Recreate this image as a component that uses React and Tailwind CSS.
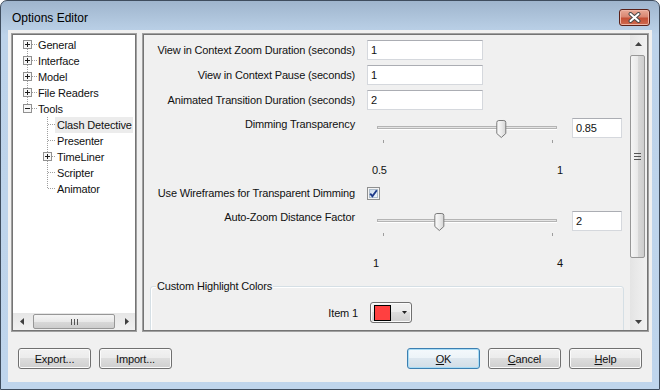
import React from "react";

const FONT = "font-['Liberation_Sans',Arial,sans-serif]";

function Box({ x, y, minus }) {
  return (
    <g>
      <rect x={x + 0.5} y={y + 0.5} width="8" height="8" fill="#f7f7f7" stroke="#919191" />
      <line x1={x + 2} x2={x + 7} y1={y + 4.5} y2={y + 4.5} stroke="#1e1e1e" />
      {!minus && <line x1={x + 4.5} x2={x + 4.5} y1={y + 2} y2={y + 7} stroke="#1e1e1e" />}
    </g>
  );
}

function Dots({ x1, y1, x2, y2 }) {
  return <line x1={x1} y1={y1} x2={x2} y2={y2} stroke="#a0a0a0" strokeDasharray="1 1" />;
}

function RootGutter({ top, bottom, minus }) {
  return (
    <svg width="25" height="16" shapeRendering="crispEdges" className="shrink-0">
      {top && <Dots x1={14.5} y1={0} x2={14.5} y2={3} />}
      {bottom && <Dots x1={14.5} y1={12} x2={14.5} y2={16} />}
      <Dots x1={19} y1={7.5} x2={25} y2={7.5} />
      <Box x={10} y={3} minus={minus} />
    </svg>
  );
}

function ChildGutter({ last, box }) {
  return (
    <svg width="42" height="16" shapeRendering="crispEdges" className="shrink-0">
      {box ? (
        <>
          <Dots x1={34.5} y1={0} x2={34.5} y2={3} />
          <Dots x1={34.5} y1={12} x2={34.5} y2={16} />
          <Dots x1={39} y1={7.5} x2={42} y2={7.5} />
          <Box x={30} y={3} />
        </>
      ) : (
        <>
          <Dots x1={34.5} y1={0} x2={34.5} y2={last ? 8 : 16} />
          <Dots x1={35} y1={7.5} x2={42} y2={7.5} />
        </>
      )}
    </svg>
  );
}

function TextBox({ value, className }) {
  return (
    <div
      className={`h-[20px] bg-white border border-[#d5d8dd] border-t-[#abadb3] pl-[3px] flex items-center leading-[14px] ${className}`}
    >
      {value}
    </div>
  );
}

function Slider({ v }) {
  const cx = 11 + v * 169;
  const left = cx - 5;
  return (
    <svg width="190" height="26" shapeRendering="crispEdges" className="shrink-0 ml-[17px]">
      <defs>
        <linearGradient id="thumbg" x1="0" x2="1" y1="0" y2="0">
          <stop offset="0" stopColor="#fbfbfb" />
          <stop offset="0.5" stopColor="#ececec" />
          <stop offset="1" stopColor="#d4d4d4" />
        </linearGradient>
      </defs>
      <rect x="5.5" y="8.5" width="179" height="2" fill="#e4e4e4" stroke="#b4b4b4" />
      <line x1="5" x2="185" y1="11.5" y2="11.5" stroke="#ffffff" />
      <line x1="11.5" x2="11.5" y1="22" y2="25" stroke="#9d9d9d" />
      <line x1="180.5" x2="180.5" y1="22" y2="25" stroke="#9d9d9d" />
      <g transform={`translate(${left},2)`} shapeRendering="geometricPrecision">
        <path
          d="M0.5,2.5 Q0.5,0.5 2.5,0.5 H7.5 Q9.5,0.5 9.5,2.5 V13.5 L5,17.5 L0.5,13.5 Z"
          fill="url(#thumbg)"
          stroke="#7a7a7a"
        />
      </g>
    </svg>
  );
}

function Btn({ children, def }) {
  return (
    <div
      className={`w-[73px] h-[21px] rounded-[3px] border flex items-center justify-center leading-[14px] ${
        def
          ? "border-[#3c7fb1] shadow-[inset_0_0_0_1px_#a8dcf5] bg-[linear-gradient(to_bottom,#f4f9fc_0%,#ecf3f8_50%,#dde7ef_50%,#d2dde6_100%)]"
          : "border-[#707070] shadow-[inset_0_0_0_1px_#fbfbfb] bg-[linear-gradient(to_bottom,#f2f2f2_0%,#ebebeb_50%,#dddddd_50%,#cfcfcf_100%)]"
      }`}
    >
      {children}
    </div>
  );
}

function Tri({ dir }) {
  const paths = {
    up: "M3.5,0 L7,4 L0,4 Z",
    down: "M0,0 L7,0 L3.5,4 Z",
    left: "M4,0 L4,7 L0,3.5 Z",
    right: "M0,0 L4,3.5 L0,7 Z",
  };
  const horiz = dir === "left" || dir === "right";
  return (
    <svg width={horiz ? 4 : 7} height={horiz ? 7 : 4}>
      <path d={paths[dir]} fill="#404040" />
    </svg>
  );
}

export default function App() {
  const roots = [
    { label: "General", top: false, bottom: true },
    { label: "Interface", top: true, bottom: true },
    { label: "Model", top: true, bottom: true },
    { label: "File Readers", top: true, bottom: true },
    { label: "Tools", top: true, bottom: false, minus: true },
  ];
  const kids = [
    { label: "Clash Detective", sel: true },
    { label: "Presenter" },
    { label: "TimeLiner", box: true },
    { label: "Scripter" },
    { label: "Animator", last: true },
  ];

  return (
    <div
      className={`${FONT} text-[11px] tracking-[-0.15px] text-[#111] w-[660px] h-[390px] flex flex-col rounded-t-[7px] border border-[#3f4d5e] bg-[linear-gradient(to_bottom,#9fb5cd_0px,#b3c9e0_22px,#bdd3ea_34px,#bfd5ec_100%)] px-[7px] overflow-hidden`}
    >
      {/* title bar */}
      <div className="h-[29px] -mx-[7px] pl-[11px] pr-[9px] flex items-start justify-between shrink-0">
        <span className="mt-[10px] text-[12px] tracking-normal leading-[15px] text-black">Options Editor</span>
        <div className="mt-[8px] w-[31px] h-[17px] rounded-[3px] border border-[#5b2118] bg-[linear-gradient(to_bottom,#e8a996_0%,#d98772_45%,#c45036_55%,#cf6a4e_100%)] shadow-[inset_0_0_0_1px_#eeb5a6] flex items-center justify-center">
          <svg width="13" height="11">
            <path d="M2.5,2 L10.5,9 M10.5,2 L2.5,9" stroke="#4a4a4a" strokeWidth="4" strokeLinecap="round" />
            <path d="M2.5,2 L10.5,9 M10.5,2 L2.5,9" stroke="#ffffff" strokeWidth="2" strokeLinecap="round" />
          </svg>
        </div>
      </div>

      {/* client */}
      <div className="h-[352px] bg-[#f0f0f0] flex flex-col pt-[3px] px-[3px] shrink-0">
        <div className="flex gap-[5px] h-[299px]">
          {/* tree */}
          <div className="w-[126px] h-full border border-[#a0a0a0]">
            <div className="w-full h-full border border-[#747474] bg-white flex flex-col">
              <div className="flex-1 pt-[2px] flex flex-col leading-[16px]">
                {roots.map((r) => (
                  <div key={r.label} className="flex h-[16px] items-center">
                    <RootGutter top={r.top} bottom={r.bottom} minus={r.minus} />
                    <span className="whitespace-nowrap">{r.label}</span>
                  </div>
                ))}
                {kids.map((k) => (
                  <div key={k.label} className="flex h-[16px] items-center">
                    <ChildGutter last={k.last} box={k.box} />
                    <span
                      className={`whitespace-nowrap pl-[2px] h-[16px] ${k.sel ? "bg-[#ececec] w-[78px]" : ""}`}
                    >
                      {k.label}
                    </span>
                  </div>
                ))}
              </div>
              <div className="h-[17px] flex bg-[linear-gradient(to_bottom,#e6e6e6,#f1f1f1)] shrink-0">
                <div className="w-[17px] h-full flex items-center justify-center">
                  <Tri dir="left" />
                </div>
                <div className="flex-1 flex items-center">
                  <div className="ml-[3px] w-[82px] h-[15px] rounded-[2px] border border-[#979797] bg-[linear-gradient(to_bottom,#f5f5f5_0%,#e9e9e9_50%,#d9d9d9_51%,#cdcdcd_100%)] flex items-center justify-center gap-[2px]">
                    <div className="w-[1px] h-[6px] bg-[#555]" />
                    <div className="w-[1px] h-[6px] bg-[#555]" />
                    <div className="w-[1px] h-[6px] bg-[#555]" />
                  </div>
                </div>
                <div className="w-[17px] h-full flex items-center justify-center">
                  <Tri dir="right" />
                </div>
              </div>
            </div>
          </div>

          {/* right panel */}
          <div className="w-[507px] h-full border border-[#a0a0a0]">
            <div className="w-full h-full border border-[#747474] flex">
              <div className="flex-1 overflow-hidden flex flex-col">
                <div className="flex items-center h-[20px] mt-[5px] shrink-0">
                  <div className="w-[211px] text-right leading-[14px]">View in Context Zoom Duration (seconds)</div>
                  <TextBox className="ml-[12px] w-[116px]" value="1" />
                </div>
                <div className="flex items-center h-[20px] mt-[5px] shrink-0">
                  <div className="w-[211px] text-right leading-[14px]">View in Context Pause (seconds)</div>
                  <TextBox className="ml-[12px] w-[116px]" value="1" />
                </div>
                <div className="flex items-center h-[20px] mt-[5px] shrink-0">
                  <div className="w-[211px] text-right leading-[14px]">Animated Transition Duration (seconds)</div>
                  <TextBox className="ml-[12px] w-[116px]" value="2" />
                </div>

                <div className="flex items-start h-[26px] mt-[8px] shrink-0">
                  <div className="w-[211px] text-right leading-[12px]">Dimming Transparency</div>
                  <Slider v={0.7} />
                  <TextBox className="ml-[10px] w-[50px]" value="0.85" />
                </div>
                <div className="flex h-[14px] mt-[19px] leading-[14px] shrink-0">
                  <div className="ml-[228px] w-[191px] flex justify-between">
                    <span>0.5</span>
                    <span>1</span>
                  </div>
                </div>

                <div className="flex items-center h-[14px] mt-[9px] shrink-0">
                  <div className="w-[211px] text-right leading-[14px]">Use Wireframes for Transparent Dimming</div>
                  <svg width="13" height="13" className="ml-[12px]" shapeRendering="crispEdges">
                    <defs>
                      <linearGradient id="cbg" x1="0" x2="1" y1="0" y2="1">
                        <stop offset="0" stopColor="#c9d9ea" />
                        <stop offset="1" stopColor="#f3f7fb" />
                      </linearGradient>
                    </defs>
                    <rect x="0.5" y="0.5" width="12" height="12" fill="#f4f4f4" stroke="#8e8f8f" />
                    <rect x="2.5" y="2.5" width="8" height="8" fill="url(#cbg)" stroke="#aebdcc" />
                    <path
                      d="M3.2,6.6 L5.4,9.2 L9.8,3.2"
                      fill="none"
                      stroke="#1e3a8a"
                      strokeWidth="1.9"
                      shapeRendering="geometricPrecision"
                    />
                  </svg>
                </div>

                <div className="flex items-start h-[26px] mt-[11px] shrink-0">
                  <div className="w-[211px] text-right leading-[12px]">Auto-Zoom Distance Factor</div>
                  <Slider v={1 / 3} />
                  <TextBox className="ml-[10px] w-[50px]" value="2" />
                </div>
                <div className="flex h-[14px] mt-[19px] leading-[14px] shrink-0">
                  <div className="ml-[229px] w-[190px] flex justify-between">
                    <span>1</span>
                    <span>4</span>
                  </div>
                </div>

                <div className="relative ml-[6px] mt-[16px] w-[474px] h-[80px] shrink-0 rounded-[3px] border border-[#d5dfe5] shadow-[inset_1px_1px_0_#ffffff]">
                  <div className="absolute -top-[8px] left-[5px] px-[1px] bg-[#f0f0f0] leading-[14px]">
                    Custom Highlight Colors
                  </div>
                  <div className="flex items-center h-[21px] mt-[15px]">
                    <div className="w-[207px] text-right leading-[14px]">Item 1</div>
                    <div className="ml-[12px] w-[42px] h-[21px] rounded-[3px] border border-[#707070] shadow-[inset_0_0_0_1px_#fbfbfb] bg-[linear-gradient(to_bottom,#f2f2f2_0%,#ebebeb_50%,#dddddd_50%,#cfcfcf_100%)] flex items-center">
                      <div className="ml-[3px] w-[17px] h-[16px] border border-black bg-[#ff4040]" />
                      <svg width="5" height="3" className="ml-[11px]">
                        <path d="M0,0 L5,0 L2.5,3 Z" fill="#202020" />
                      </svg>
                    </div>
                  </div>
                </div>
              </div>

              {/* vertical scrollbar */}
              <div className="w-[17px] h-full flex flex-col bg-[linear-gradient(to_right,#e4e4e4,#f1f1f1)] shrink-0">
                <div className="h-[17px] flex items-center justify-center">
                  <Tri dir="up" />
                </div>
                <div className="flex-1">
                  <div className="mt-[3px] h-[203px] w-[15px] rounded-[2px] border border-[#979797] bg-[linear-gradient(to_right,#f5f5f5_0%,#e9e9e9_50%,#d9d9d9_51%,#cdcdcd_100%)] flex flex-col items-center justify-center gap-[2px]">
                    <div className="w-[7px] h-[1px] bg-[#555]" />
                    <div className="w-[7px] h-[1px] bg-[#555]" />
                    <div className="w-[7px] h-[1px] bg-[#555]" />
                  </div>
                </div>
                <div className="h-[17px] flex items-center justify-center">
                  <Tri dir="down" />
                </div>
              </div>
            </div>
          </div>
        </div>

        {/* buttons */}
        <div className="mt-[16px] flex px-[7px]">
          <Btn>Export...</Btn>
          <div className="ml-[8px]">
            <Btn>Import...</Btn>
          </div>
          <div className="ml-auto flex gap-[8px]">
            <Btn def>
              <span className="underline">O</span>K
            </Btn>
            <Btn>
              <span className="underline">C</span>ancel
            </Btn>
            <Btn>
              <span className="underline">H</span>elp
            </Btn>
          </div>
        </div>
      </div>
    </div>
  );
}
